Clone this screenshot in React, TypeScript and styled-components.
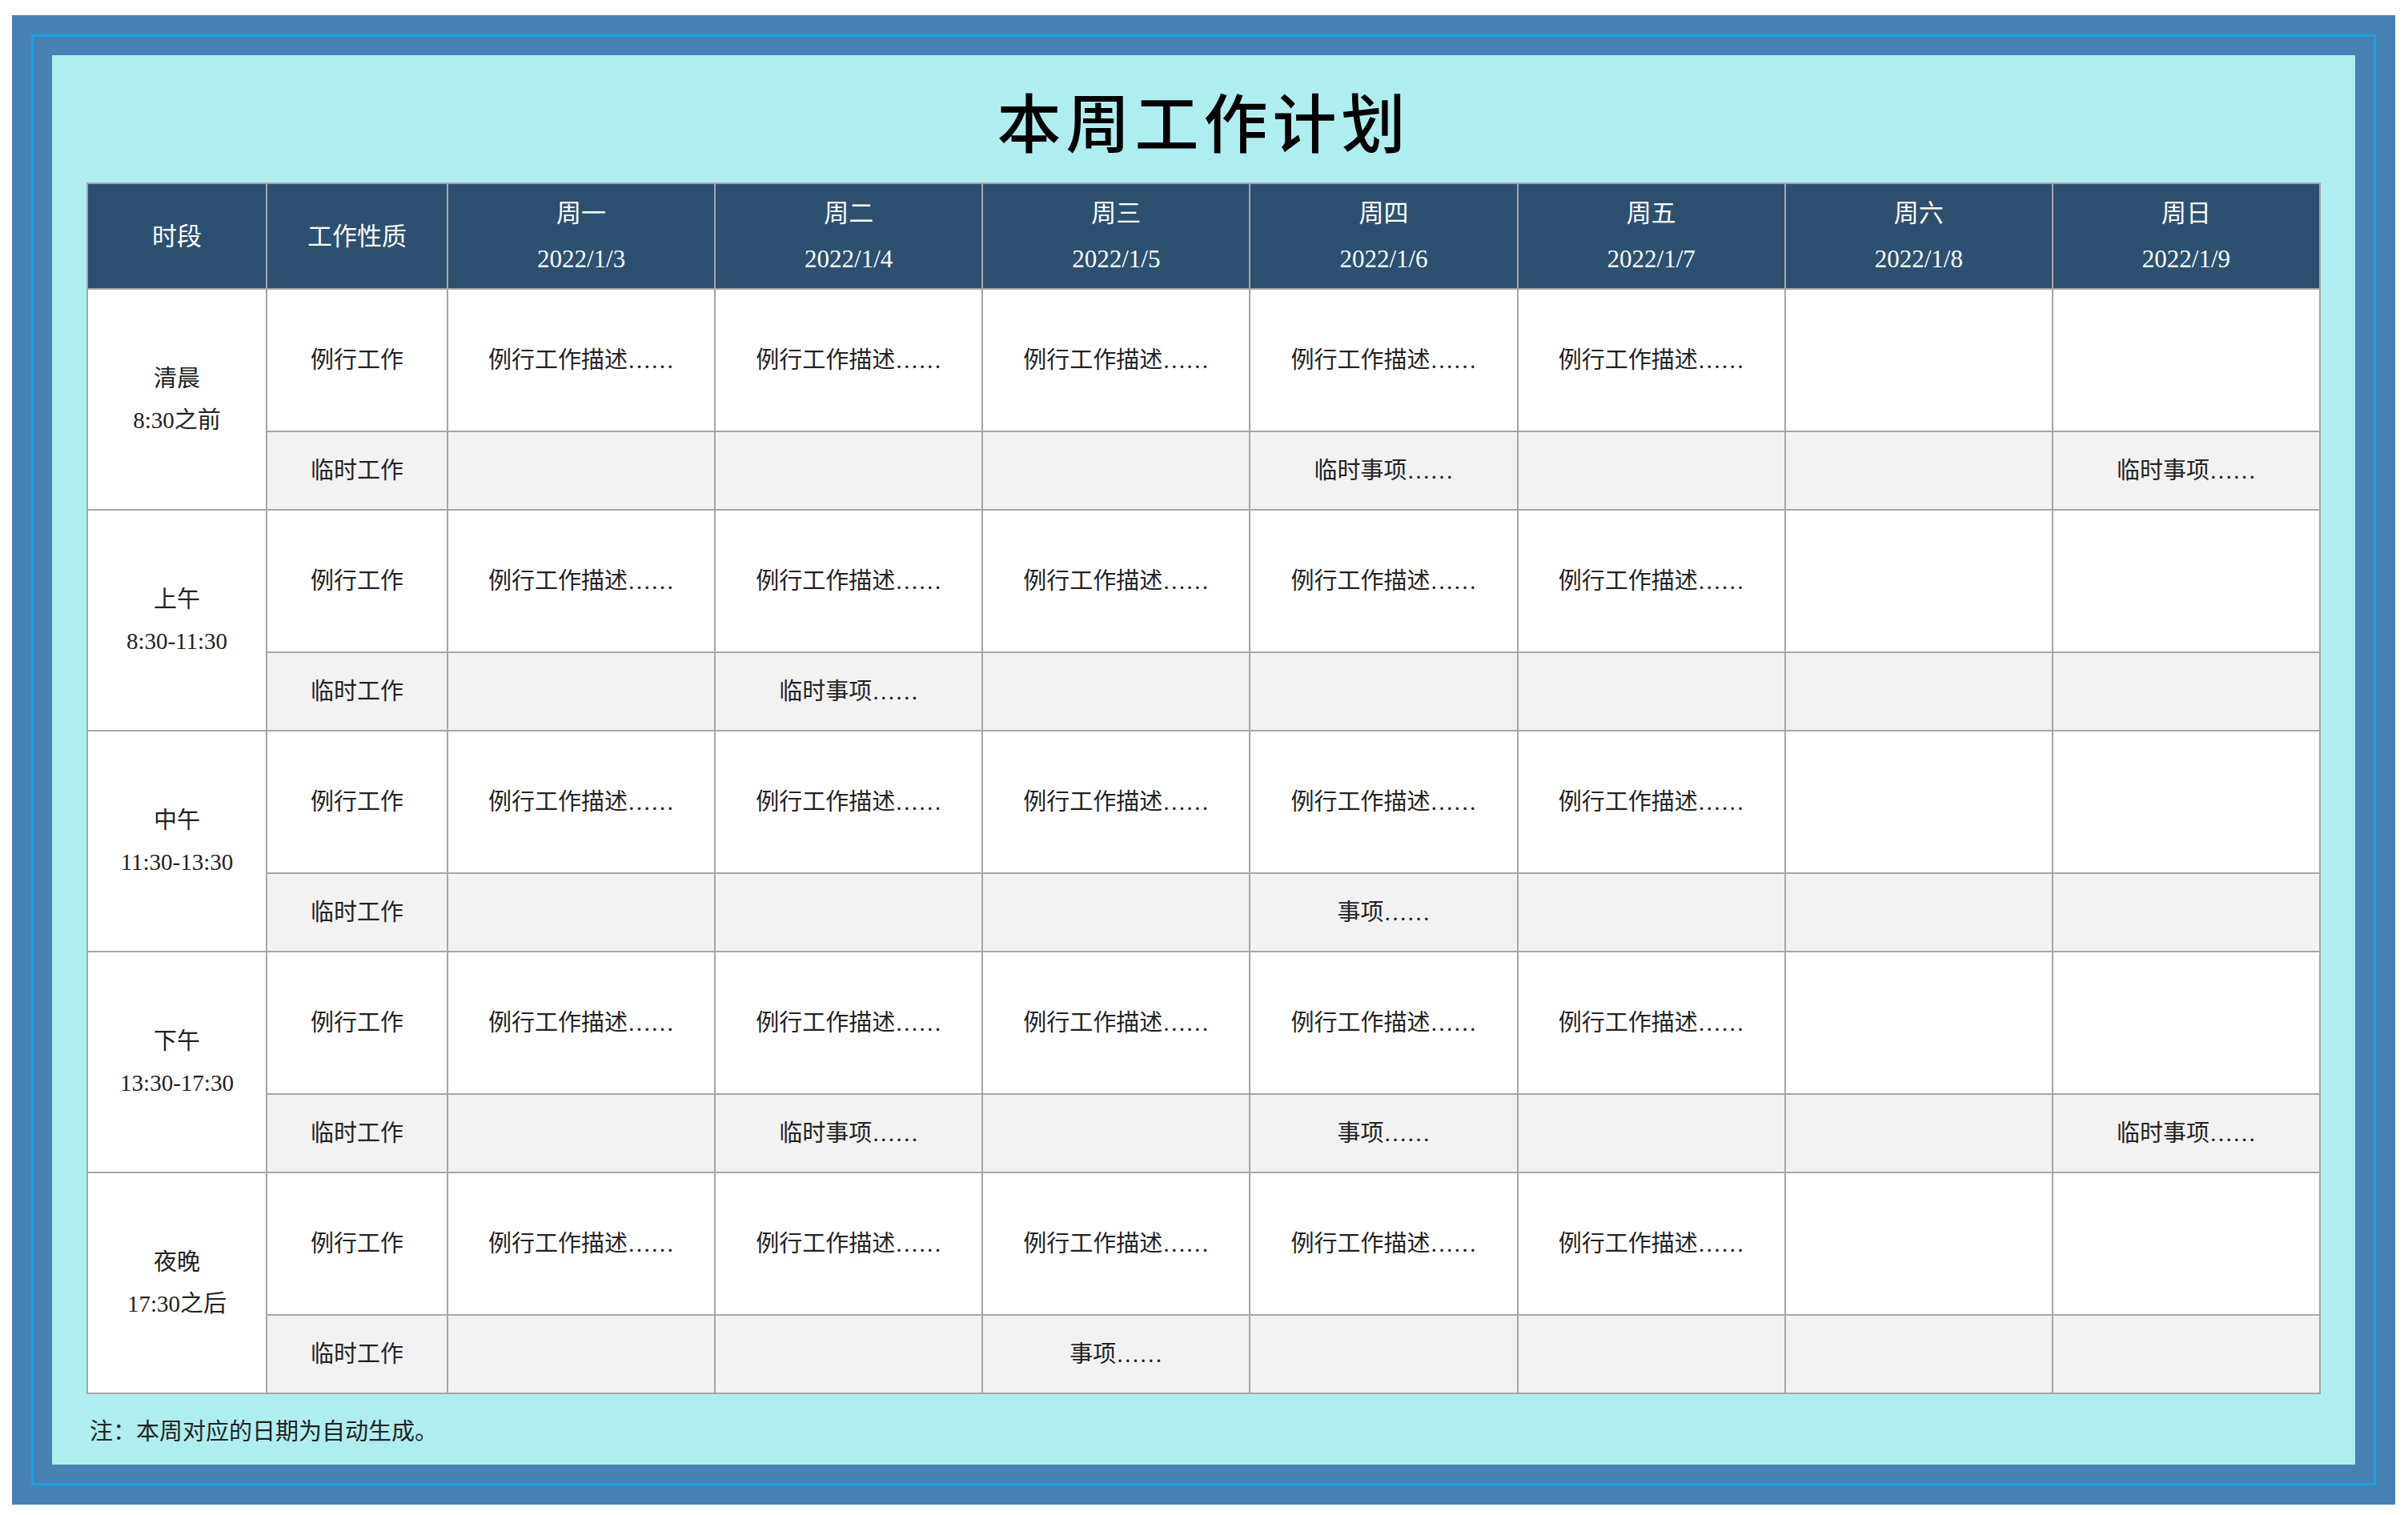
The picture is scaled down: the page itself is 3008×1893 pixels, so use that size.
import React from "react";
import styled, { createGlobalStyle } from "styled-components";

const Global = createGlobalStyle`
  html, body { margin: 0; padding: 0; background: #fff; }
  body { font-family: "Liberation Serif", "Noto Sans CJK SC", serif; }
`;

const Outer = styled.div`
  margin: 19px 0 0 15px;
  width: 2977px;
  height: 1861px;
  box-sizing: border-box;
  background: #4682b4;
  padding: 24px;
`;

const Line = styled.div`
  height: 100%;
  box-sizing: border-box;
  border: 3px solid #1ea0e6;
  padding: 23px;
`;

const Panel = styled.div`
  height: 100%;
  box-sizing: border-box;
  background: #afeeee;
  padding: 0 43px;
  display: flex;
  flex-direction: column;
`;

const Title = styled.h1`
  margin: 0;
  height: 159px;
  display: flex;
  align-items: center;
  justify-content: center;
  font-family: "Noto Sans CJK SC", sans-serif;
  font-weight: 500;
  font-size: 80px;
  letter-spacing: 6px;
  color: #000;
`;

const Grid = styled.div`
  display: grid;
  grid-template-columns: 222px 224px repeat(7, 1fr);
  grid-template-rows: 130px repeat(5, 176px 96px);
  gap: 2px;
  background: #a6a6a6;
  border: 2px solid #a6a6a6;
`;

const Head = styled.div`
  background: #2d5070;
  color: #fff;
  font-size: 31px;
  display: flex;
  flex-direction: column;
  align-items: center;
  justify-content: center;
  gap: 26px;
  line-height: 1;
`;

const Cell = styled.div<{ $alt?: boolean }>`
  background: ${(p) => (p.$alt ? "#f2f2f2" : "#ffffff")};
  color: #222;
  font-size: 29px;
  display: flex;
  flex-direction: column;
  align-items: center;
  justify-content: center;
  text-align: center;
  line-height: 52px;
`;

const Period = styled(Cell)`
  grid-row: span 2;
`;

const Note = styled.div`
  flex: 1;
  display: flex;
  align-items: center;
  padding-left: 4px;
  font-size: 29px;
  color: #222;
`;

const days = [
  ["周一", "2022/1/3"],
  ["周二", "2022/1/4"],
  ["周三", "2022/1/5"],
  ["周四", "2022/1/6"],
  ["周五", "2022/1/7"],
  ["周六", "2022/1/8"],
  ["周日", "2022/1/9"],
];

const periods: { name: string; time: string; temp: string[] }[] = [
  { name: "清晨", time: "8:30之前", temp: ["", "", "", "临时事项……", "", "", "临时事项……"] },
  { name: "上午", time: "8:30-11:30", temp: ["", "临时事项……", "", "", "", "", ""] },
  { name: "中午", time: "11:30-13:30", temp: ["", "", "", "事项……", "", "", ""] },
  { name: "下午", time: "13:30-17:30", temp: ["", "临时事项……", "", "事项……", "", "", "临时事项……"] },
  { name: "夜晚", time: "17:30之后", temp: ["", "", "事项……", "", "", "", ""] },
];

export default function App() {
  return (
    <>
      <Global />
      <Outer>
        <Line>
          <Panel>
            <Title>本周工作计划</Title>
            <Grid>
              <Head>时段</Head>
              <Head>工作性质</Head>
              {days.map(([d, date]) => (
                <Head key={d}>
                  <span>{d}</span>
                  <span>{date}</span>
                </Head>
              ))}
              {periods.map((p) => (
                <React.Fragment key={p.name}>
                  <Period>
                    <span>{p.name}</span>
                    <span>{p.time}</span>
                  </Period>
                  <Cell>例行工作</Cell>
                  {days.map(([d], i) => (
                    <Cell key={d}>{i < 5 ? "例行工作描述……" : ""}</Cell>
                  ))}
                  <Cell $alt>临时工作</Cell>
                  {p.temp.map((t, i) => (
                    <Cell $alt key={i}>{t}</Cell>
                  ))}
                </React.Fragment>
              ))}
            </Grid>
            <Note>注：本周对应的日期为自动生成。</Note>
          </Panel>
        </Line>
      </Outer>
    </>
  );
}
